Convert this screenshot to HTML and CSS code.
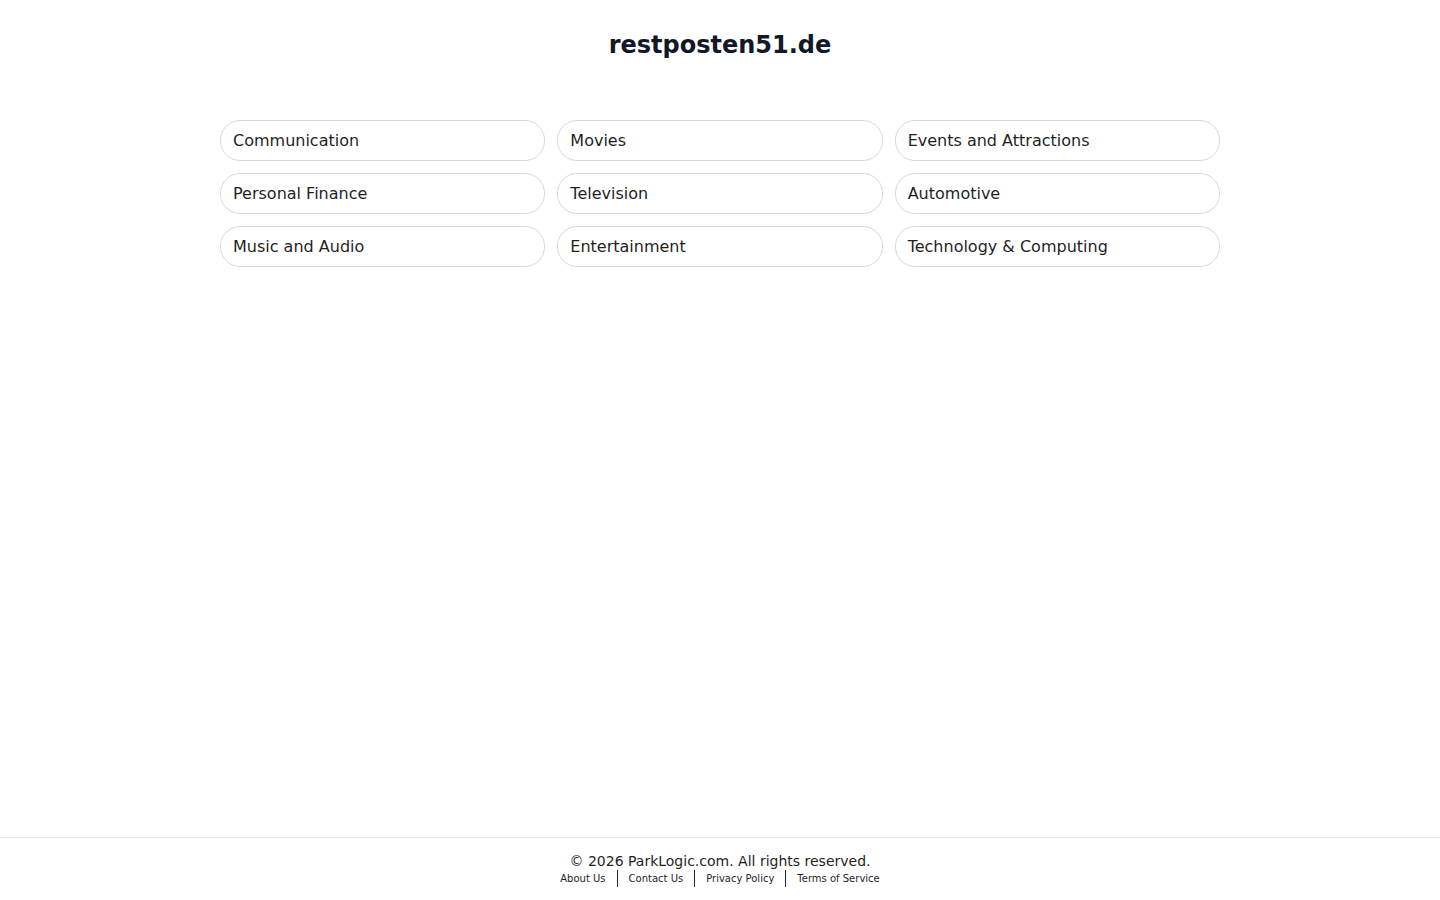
FILE: index.html
```html
<!DOCTYPE html>
<html lang="en">
<head>
  <meta charset="UTF-8">
  <meta name="viewport" content="width=device-width, initial-scale=1.0">
  <title>restposten51.de</title>
  <link rel="stylesheet" href="styles.css">
</head>
<body>
  <div class="page">
    <header class="head">
      <h1 class="domain">restposten51.de</h1>
    </header>
    <main class="main">
      <ul class="links">
        <li><a href="#">Communication</a></li>
        <li><a href="#">Movies</a></li>
        <li><a href="#">Events and Attractions</a></li>
        <li><a href="#">Personal Finance</a></li>
        <li><a href="#">Television</a></li>
        <li><a href="#">Automotive</a></li>
        <li><a href="#">Music and Audio</a></li>
        <li><a href="#">Entertainment</a></li>
        <li><a href="#">Technology &amp; Computing</a></li>
      </ul>
    </main>
    <footer class="foot">
      <p class="copy">&copy; 2026 ParkLogic.com. All rights reserved.</p>
      <ul class="legal">
        <li><a href="#">About Us</a></li>
        <li><a href="#">Contact Us</a></li>
        <li><a href="#">Privacy Policy</a></li>
        <li><a href="#">Terms of Service</a></li>
      </ul>
    </footer>
  </div>
</body>
</html>
```

FILE: styles.css
```css
*{
  margin: 0;
  padding: 0;
  box-sizing: border-box;
}
ul{
  list-style: none;
}
a{
  text-decoration: none;
  color: inherit;
}
body{
  font-family: "DejaVu Sans", Verdana, sans-serif;
  color: #1f1f1f;
  background: #fff;
}
.page{
  min-height: 100vh;
  display: flex;
  flex-direction: column;
}
.head{
  padding-top: 31px;
  text-align: center;
}
.domain{
  font-size: 24px;
  line-height: 28px;
  font-weight: bold;
  color: #111827;
}
.main{
  flex: 1;
  padding-top: 61px;
}
.links{
  width: 1000px;
  margin: 0 auto;
  display: grid;
  grid-template-columns: repeat(3, 1fr);
  gap: 12px;
}
.links a{
  display: block;
  height: 41px;
  line-height: 39px;
  padding: 0 12px;
  border: 1px solid #d9d9d9;
  border-radius: 20px;
  font-size: 16px;
  color: #1f1f1f;
}
.foot{
  border-top: 1px solid #e5e5e5;
  padding: 14px 0 13px;
  text-align: center;
}
.copy{
  font-size: 14px;
  line-height: 18px;
  color: #1f1f1f;
}
.legal{
  display: flex;
  justify-content: center;
  font-size: 10px;
  line-height: 17px;
}
.legal li{
  padding: 0 11px;
  border-left: 1px solid #222;
}
.legal li:first-child{
  border-left: none;
}
```
